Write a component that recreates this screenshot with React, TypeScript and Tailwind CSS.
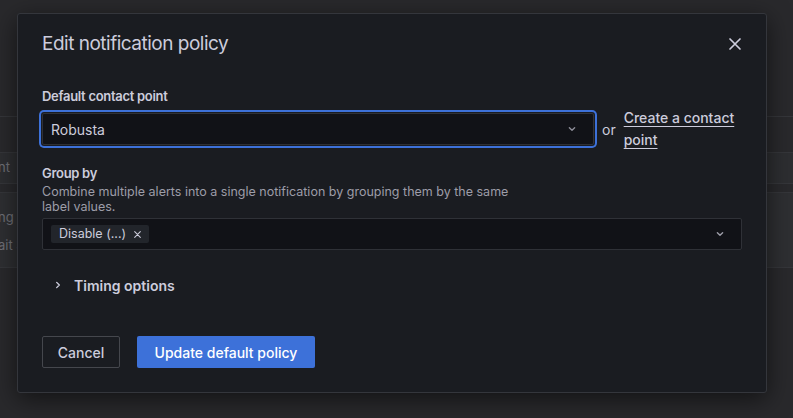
import React from 'react';

function ChevronDown({ className }: { className?: string }) {
    return (
        <svg viewBox="0 0 16 16" className={className} fill="none" stroke="currentColor" strokeWidth="1.6" strokeLinecap="round" strokeLinejoin="round">
            <path d="M5 6.5 8 9.5 11 6.5" />
        </svg>
    );
}

function ChevronRight({ className }: { className?: string }) {
    return (
        <svg viewBox="0 0 16 16" className={className} fill="none" stroke="currentColor" strokeWidth="1.6" strokeLinecap="round" strokeLinejoin="round">
            <path d="M6.5 5 9.5 8 6.5 11" />
        </svg>
    );
}

function Cross({ className, width = 1.6 }: { className?: string; width?: number }) {
    return (
        <svg viewBox="0 0 16 16" className={className} fill="none" stroke="currentColor" strokeWidth={width} strokeLinecap="round">
            <path d="M3 3 13 13M13 3 3 13" />
        </svg>
    );
}

// Dimmed page behind the modal
function Backdrop() {
    return (
        <div className="flex flex-col h-full text-[13px] text-[#6f7077]">
            <div className="h-[116px]" />
            <div className="h-[36px] border-t border-[#35363a]" />
            <div className="h-[31px] border-t border-[#35363a] bg-[#2d2e31] flex items-center">
                <span className="-ml-[2px]">nt</span>
            </div>
            <div className="h-[9px] border-t border-[#35363a]" />
            <div className="h-[75px] border-t border-[#35363a] bg-[#2e2f32] flex flex-col pt-[15px]">
                <span className="-ml-[2px]">ng</span>
                <span className="-ml-[2px] mt-[8px]">ait 3</span>
            </div>
            <div className="flex-1 border-t border-[#35363a]" />
        </div>
    );
}

export default function App() {
    return (
        <div className="relative w-[793px] h-[418px] overflow-hidden bg-[#29292c]" style={{ fontFamily: 'Inter, "Noto Sans", sans-serif' }}>
            <Backdrop />

            <div className="absolute left-[17px] top-[13px] w-[750px] h-[380px] bg-[#1a1c21] border border-[#34363c] rounded-[3px] shadow-[0_6px_24px_rgba(0,0,0,0.55)]">
                <div className="px-[24px] pt-[16px]">
                    <div className="flex items-center justify-between h-[28px]">
                        <h2 className="text-[19px] leading-[28px] tracking-[-0.5px] text-[#ccccdc]">Edit notification policy</h2>
                        <Cross className="w-[16px] h-[16px] text-[#ccccdc] mr-[-1px]" width={1.7} />
                    </div>

                    <div className="mt-[28px]">
                        <label className="block text-[13px] leading-[20px] font-semibold tracking-[-0.3px] text-[#ccccdc]">Default contact point</label>
                        <div className="flex items-center h-[44px] mt-[1px]">
                            <div className="w-[552px] h-[32px] flex items-center justify-between bg-[#111217] border border-[#2f3137] rounded-[2px] ring-2 ring-[#3d71d9] ring-offset-1 ring-offset-[#1a1c21] pl-[8px] pr-[14px] shrink-0">
                                <span className="text-[14px] text-[#ccccdc]">Robusta</span>
                                <ChevronDown className="w-[14px] h-[14px] text-[#8e8e99]" />
                            </div>
                            <span className="ml-[8px] text-[14px] text-[#ccccdc]">or</span>
                            <a className="ml-[8px] text-[14px] leading-[22px] font-medium text-[#ccccdc] underline underline-offset-[3px] decoration-[#ccccdc]">Create a contact point</a>
                        </div>
                    </div>

                    <div className="mt-[12px]">
                        <label className="block text-[13px] leading-[20px] font-semibold tracking-[-0.3px] text-[#ccccdc]">Group by</label>
                        <p className="mt-[1px] max-w-[480px] text-[12.5px] leading-[15px] text-[#9d9da8]">
                            Combine multiple alerts into a single notification by grouping them by the same label values.
                        </p>
                        <div className="mt-[4px] h-[32px] flex items-center justify-between bg-[#111217] border border-[#2f3137] rounded-[2px] pl-[8px] pr-[14px]">
                            <span className="h-[18px] flex items-center gap-[7px] bg-[#22252b] rounded-[2px] pl-[8px] pr-[7px] text-[12.5px] text-[#ccccdc]">
                                Disable (...)
                                <Cross className="w-[9px] h-[9px] text-[#ccccdc]" width={1.9} />
                            </span>
                            <ChevronDown className="w-[14px] h-[14px] text-[#9d9da8]" />
                        </div>
                    </div>

                    <div className="mt-[23px] flex items-center h-[24px] pl-[9px]">
                        <ChevronRight className="w-[14px] h-[14px] text-[#ccccdc]" />
                        <span className="ml-[9px] text-[14px] font-semibold text-[#ccccdc]">Timing options</span>
                    </div>

                    <div className="mt-[39px] flex items-center gap-[17px]">
                        <button className="h-[32px] w-[78px] border border-[#45474d] rounded-[2px] text-[14px] font-medium text-[#ccccdc]">Cancel</button>
                        <button className="h-[32px] w-[178px] bg-[#3d71d9] rounded-[2px] text-[14px] font-medium text-white">Update default policy</button>
                    </div>
                </div>
            </div>
        </div>
    );
}
